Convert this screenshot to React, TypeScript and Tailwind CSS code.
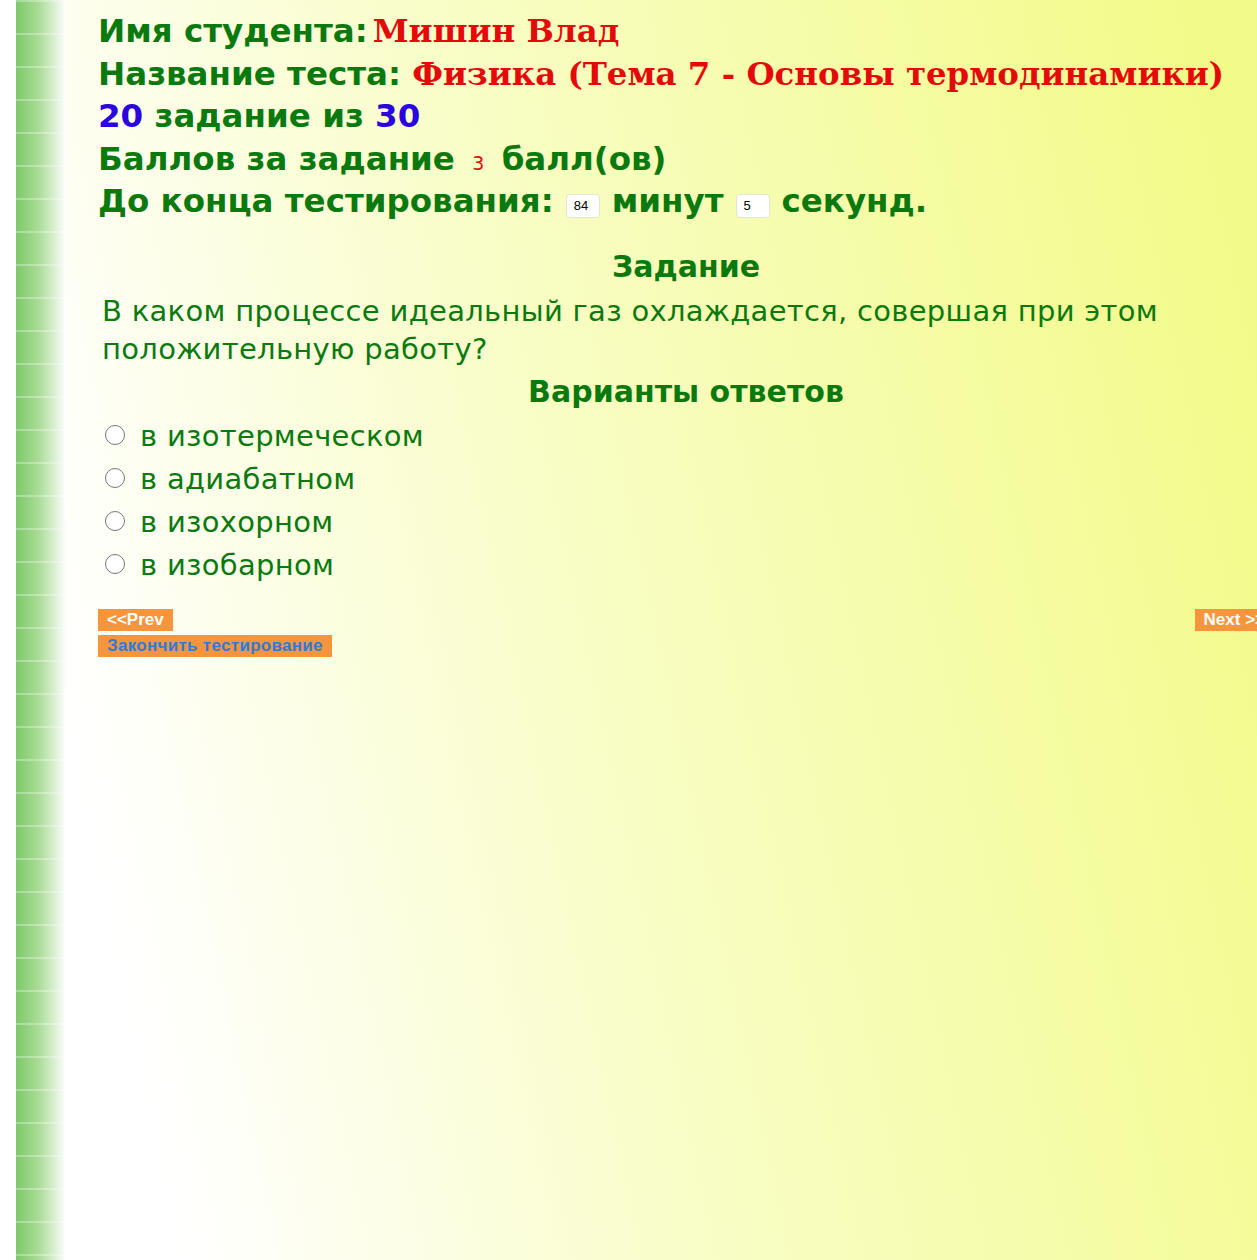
import React from 'react';

const verdana = "font-['DejaVu_Sans',Verdana,sans-serif]";
const serif = "font-['DejaVu_Serif',Georgia,serif]";

const options = ['в изотермеческом', 'в адиабатном', 'в изохорном', 'в изобарном'];

function Box({ value }: { value: string }) {
  return (
    <span className="inline-flex items-center w-[34px] h-[24px] mt-[10px] mx-[12px] px-[7px] rounded-[4px] bg-white border border-[#e4e4d0] text-[13px] font-normal text-black font-['Liberation_Sans',Arial,sans-serif]">
      {value}
    </span>
  );
}

export default function App() {
  return (
    <div className="h-[1260px] w-[1257px] overflow-hidden flex bg-[linear-gradient(78deg,#ffffff_12%,#f9fdc8_45%,#f2fb8a_95%)]">
      {/* left strip */}
      <div className="w-[66px] shrink-0 flex">
        <div className="w-[16px] bg-white" />
        <div className="w-[50px] bg-[repeating-linear-gradient(to_bottom,rgba(255,255,255,0.3)_0px,rgba(255,255,255,0.3)_2px,transparent_2px,transparent_33px),linear-gradient(to_right,#7ec86a,#a9dc95_45%,#ffffff)]" />
      </div>

      <div className={`shrink-0 w-[1208px] pl-[32px] pt-[10px] text-[#0b7a0e] ${verdana}`}>
        <div className="font-bold text-[32.5px] leading-[42.5px]">
          <div className="h-[42.5px] whitespace-nowrap">
            Имя студента:<span className={`${serif} text-[#e50a0a] text-[32.4px] ml-[5px]`}>Мишин Влад</span>
          </div>
          <div className="h-[42.5px] whitespace-nowrap">
            Название теста: <span className={`${serif} text-[#e50a0a] text-[32.4px]`}>Физика (Тема 7 - Основы термодинамики)</span>
          </div>
          <div className="h-[42.5px]">
            <span className="text-[#2a05e0]">20</span> задание из <span className="text-[#2a05e0]">30</span>
          </div>
          <div className="h-[42.5px]">
            Баллов за задание <span className="text-[#e50a0a] text-[19px] font-normal mx-[6px]">3</span> балл(ов)
          </div>
          <div className="h-[42.5px] flex items-center whitespace-nowrap">
            До конца тестирования:<Box value="84" />минут<Box value="5" />секунд.
          </div>
        </div>

        <div className="mt-[26px] text-center font-bold text-[30px] leading-[36px]">Задание</div>
        <div className="mt-[7px] pl-[4px] text-[29px] leading-[38px] tracking-[0.3px]">
          В каком процессе идеальный газ охлаждается, совершая при этом положительную работу?
        </div>
        <div className="mt-[6px] text-center font-bold text-[30px] leading-[36px]">Варианты ответов</div>

        <div className="mt-[6px] flex flex-col">
          {options.map((o) => (
            <label key={o} className="flex items-center h-[43px] text-[29px] tracking-[0.3px]">
              <span className="w-[20px] h-[20px] ml-[7px] mr-[15px] rounded-full border border-[#777] bg-white -mt-[5px]" />
              <span>{o}</span>
            </label>
          ))}
        </div>

        <div className="mt-[21px] flex justify-between font-['Liberation_Sans',Arial,sans-serif] font-bold text-[17px] leading-[22px]">
          <div className="flex flex-col gap-[4px] items-start">
            <button className="bg-[#f7953d] text-white px-[9px] h-[22px]">&lt;&lt;Prev</button>
            <button className="bg-[#f7953d] text-[#2f7ad6] px-[9px] h-[22px] tracking-[0.3px]">Закончить тестирование</button>
          </div>
          <div>
            <button className="bg-[#f7953d] text-white px-[9px] h-[22px]">Next &gt;&gt;</button>
          </div>
        </div>
      </div>
    </div>
  );
}
